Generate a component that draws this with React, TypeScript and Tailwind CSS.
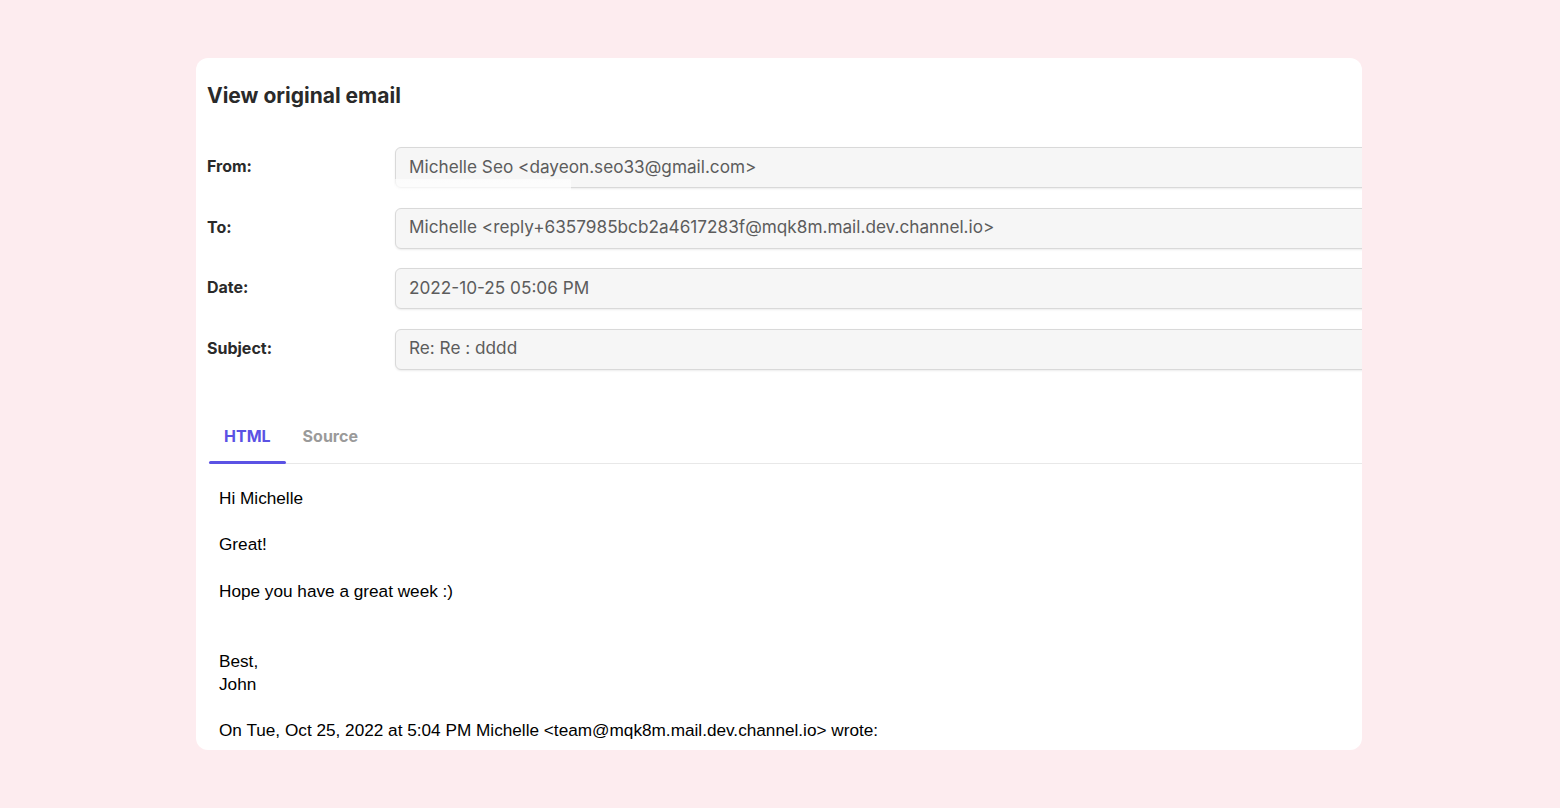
const fields = [
  { label: "From:", value: "Michelle Seo <dayeon.seo33@gmail.com>" },
  { label: "To:", value: "Michelle <reply+6357985bcb2a4617283f@mqk8m.mail.dev.channel.io>" },
  { label: "Date:", value: "2022-10-25 05:06 PM" },
  { label: "Subject:", value: "Re: Re : dddd" },
];

const App = () => {
  return (
    <div className="min-h-screen w-full bg-[#fdecef] pt-[58px] pl-[196px] font-['Inter',sans-serif]">
      <div className="relative w-[1166px] h-[692px] overflow-hidden rounded-xl bg-white pl-[11px]">
        <h1 className="pt-[24px] text-[21px] leading-[28px] font-bold text-[#2a2a2a]">
          View original email
        </h1>

        <div className="mt-[37px] flex flex-col gap-[19.5px]">
          {fields.map((f) => (
            <div key={f.label} className="flex items-center">
              <div className="w-[188px] shrink-0 pb-[3px] text-[16px] font-bold text-[#2a2a2a]">{f.label}</div>
              <div className="h-[41px] w-[1100px] shrink-0 flex items-center rounded-l-md border border-[#d9d9d9] bg-[#f6f6f6] px-[13px] pb-[2px] text-[17.2px] text-[#5c5c5c] shadow-[0_1px_2px_rgba(0,0,0,0.08)]">
                {f.value}
              </div>
            </div>
          ))}
        </div>

        {/* stray white patch under the From field */}
        <div className="absolute left-[199px] top-[121px] h-[28px] w-[176px] bg-gradient-to-b from-white/60 to-white" />

        <div className="mt-[41px] ml-[2px] flex border-b border-[#e8e8e8]">
          <div className="relative px-[15px] pt-[13px] pb-[15px] text-[16px] leading-[24px] font-bold text-[#5b52e4]">
            HTML
            <div className="absolute left-0 right-0 -bottom-px h-[3px] rounded-full bg-[#5b52e4]" />
          </div>
          <div className="pl-[17px] pt-[13px] pb-[15px] text-[16px] leading-[24px] font-bold text-[#9a9a9a]">
            Source
          </div>
        </div>

        <div className="pl-[12px] pt-[23px] font-['Liberation_Sans',Arial,sans-serif] text-[17.2px] leading-[23.3px] text-black">
          <div>Hi Michelle</div>
          <div>&nbsp;</div>
          <div>Great!</div>
          <div>&nbsp;</div>
          <div>Hope you have a great week :)</div>
          <div>&nbsp;</div>
          <div>&nbsp;</div>
          <div>Best,</div>
          <div>John</div>
          <div>&nbsp;</div>
          <div>On Tue, Oct 25, 2022 at 5:04 PM Michelle &lt;team@mqk8m.mail.dev.channel.io&gt; wrote:</div>
          <div>.</div>
        </div>
      </div>
    </div>
  );
};

export default App;
